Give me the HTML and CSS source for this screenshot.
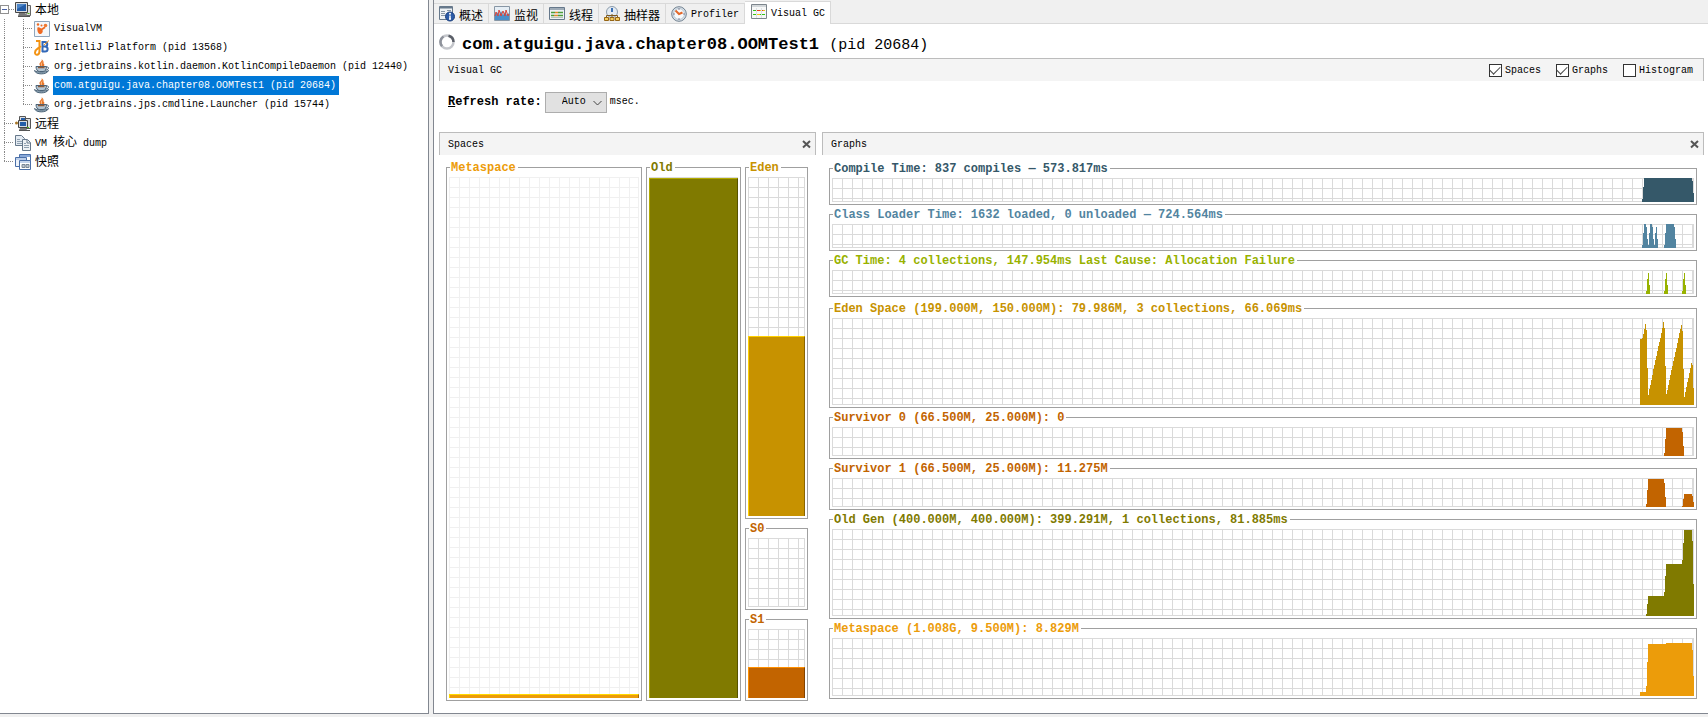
FILE: index.html
```html
<!DOCTYPE html>
<html lang="zh-CN">
<head>
<meta charset="utf-8">
<title>VisualVM</title>
<link rel="stylesheet" href="styles.css">
</head>
<body>
<svg class="defs" aria-hidden="true">
  <symbol id="java" viewBox="0 0 16 16">
    <path d="M7.500 0C9 2 5 3.500 5.500 5.500c.2 1 1 1.500 1 2.500h2.500C11 6.500 10.500 5 9.500 4.500 10 3 9 1 7.500 0z" fill="#e8762a"/>
    <path d="M8.500 3C7 4 7 5.500 8 8" stroke="#fbc08a" fill="none"/>
    <path d="M2 7.500h10.500c0 3-1.500 5-3.500 5H5.500C3.500 12.500 2 10.500 2 7.500z" fill="#b4c5d2" stroke="#4b6377"/>
    <path d="M12.500 8c3.300-.5 2.500 3-1.500 3.300" fill="none" stroke="#4b6377"/>
    <path d="M4 8.500h6.500" stroke="#8a5a3c" stroke-width="1.500"/>
    <path d="M.5 11.500c1 4.500 12.500 4.500 14 0-2.500 2-11.500 2-14 0z" fill="#9db1c1" stroke="#4b6377"/>
  </symbol>
  <symbol id="close" viewBox="0 0 9 9"><path d="M1 1l7 6.500M8 1L1 7.500" stroke="#555" stroke-width="2" fill="none"/></symbol>
</svg>
<div class="app">
  <nav class="tree" aria-label="Applications">
    <ul>
      <li class="row root first"><button class="expander" aria-label="Collapse"></button><span class="stub"></span>
        <svg class="icon" viewBox="0 0 16 16"><path d="M12 3.500h3.500v10H11z" fill="#ddd" stroke="#666"/><path d="M.5.500h12v10H.5z" fill="#d8dde2" stroke="#444"/><path d="M2 2h9v7H2z" fill="#245da8"/><path d="M2 2h9L2 7z" fill="#4d86c8"/><path d="M4 11h6l2 3H3z" fill="#777"/><path d="M3 14.500h12" stroke="#555"/><path d="M12.500 11.500h2" stroke="#52b51b"/></svg>
        <span class="label cjk">本地</span></li>
      <li class="row"><span class="trunk"></span><span class="elbow"></span>
        <svg class="icon" viewBox="0 0 16 16"><path d="M.5.500h15v15H.5z" fill="#f4f7fa" stroke="#8fa6bd"/><path d="M3.500 6.500c2-1 3 1 4 1l3-2 1 1.500-3 2c1 2-1 4.500-3 4-2-1-2.500-5-2-6.500z" fill="#ef6a22"/><circle cx="4" cy="3.500" r="1.200" fill="#ef6a22"/><circle cx="7.500" cy="4.500" r="1" fill="#ef6a22"/><circle cx="11.500" cy="4.500" r="1.800" fill="#f07a32"/></svg>
        <span class="label">VisualVM</span></li>
      <li class="row"><span class="trunk"></span><span class="elbow"></span>
        <svg class="icon" viewBox="0 0 16 16"><path d="M8 2h3c3 0 3 4.500 0 4.500 3.500 0 3.500 5 0 5H8M8.500 1v11M8 6.500h4" fill="none" stroke="#3268b8" stroke-width="2"/><path d="M2 1h3.500v10c0 4.500-4.500 5-4.500 1.500C1 9 4 9 7 6" fill="none" stroke="#f39314" stroke-width="2"/><path d="M10 5l5-4.500" stroke="#f39314"/></svg>
        <span class="label">IntelliJ Platform (pid 13568)</span></li>
      <li class="row"><span class="trunk"></span><span class="elbow"></span><svg class="icon"><use href="#java"/></svg>
        <span class="label">org.jetbrains.kotlin.daemon.KotlinCompileDaemon (pid 12440)</span></li>
      <li class="row"><span class="trunk"></span><span class="elbow"></span><svg class="icon"><use href="#java"/></svg>
        <span class="label selected">com.atguigu.java.chapter08.OOMTest1 (pid 20684)</span></li>
      <li class="row"><span class="trunk"></span><span class="elbow end"></span><svg class="icon"><use href="#java"/></svg>
        <span class="label">org.jetbrains.jps.cmdline.Launcher (pid 15744)</span></li>
      <li class="row root"><span class="elbow"></span>
        <svg class="icon" viewBox="0 0 16 16"><path d="M4.500.500h6v5h-6zM10 2.500h5.500v10H10z" fill="#ddd" stroke="#555"/><path d="M6 2h4v2H6z" fill="#245da8"/><path d="M3.500 4.500h9v7h-9z" fill="#d8dde2" stroke="#444"/><path d="M5 6h6v4H5z" fill="#245da8"/><path d="M5 12h6l1 2H4z" fill="#777"/><path d="M4 14.500h11" stroke="#555"/><circle cx="1.500" cy="7" r="1.500" fill="#a87627"/><path d="M12 11.500h2" stroke="#52b51b"/></svg>
        <span class="label cjk">远程</span></li>
      <li class="row root"><span class="elbow"></span>
        <svg class="icon" viewBox="0 0 16 16"><path d="M.5.500h6l3 3v7h-9z" fill="#e4ebf2" stroke="#66788b"/><path d="M2 4.500h3M2 6.500h5M2 8.500h5" stroke="#8fa0b0"/><path d="M7.500 4.500h5l3 3v8h-8z" fill="#eef2f6" stroke="#66788b"/><path d="M12 5v3h3" fill="none" stroke="#66788b"/><path d="M9 8.500h2M9 10.500h5M9 12.500h5" stroke="#8fa0b0"/></svg>
        <span class="label">VM <span class="cjk">核心</span> dump</span></li>
      <li class="row root"><span class="elbow end"></span>
        <svg class="icon" viewBox="0 0 16 16"><path d="M4.500.500h11v9h-11z" fill="#fff" stroke="#4a6fa8"/><path d="M5 2h10" stroke="#88a8d8" stroke-width="2"/><path d="M.5 3.500h11v9H.5z" fill="#eef3fa" stroke="#4a6fa8"/><path d="M1 5h10" stroke="#88a8d8"/><path d="M4.500 6.500h11v9h-11z" fill="#fff" stroke="#4a6fa8"/><path d="M5 8h10" stroke="#88a8d8"/><path d="M7 10.500h3v3H7zM11 10.500h3v3h-3z" fill="#bbc4cf" stroke="#7a8794"/></svg>
        <span class="label cjk">快照</span></li>
    </ul>
  </nav>

  <main class="main">
    <div class="tabs" role="tablist">
      <button class="tab" role="tab"><svg class="icon" viewBox="0 0 16 16"><path d="M.5.500h13v13H.5z" fill="#eef2f5" stroke="#66788b"/><path d="M1 1.500h12" stroke="#66788b" stroke-width="2"/><path d="M2 5.500h4M2 7.500h4M2 9.500h4M8 4.500h4" stroke="#8796a5"/><circle cx="11" cy="10.500" r="4.500" fill="#2b5ba8" stroke="#1c3f7c"/><path d="M11 9.500v4M10 13h2" stroke="#fff" stroke-width="1.500"/><circle cx="11" cy="7.800" r="1" fill="#fff"/></svg><span class="cjk">概述</span></button>
      <button class="tab" role="tab"><svg class="icon" viewBox="0 0 16 16"><path d="M.5.500h15v14H.5z" fill="#e6eef5" stroke="#8796a5"/><path d="M1 9l2-3 2 3 2-4 2 4 2-3 2 3 2-2v7H1z" fill="#4b8fca"/><path d="M1 10l1-4 2 4 1-6 2 6 2-5 2 5 1-6 2 6 1-2" fill="none" stroke="#d8453a"/></svg><span class="cjk">监视</span></button>
      <button class="tab" role="tab"><svg class="icon" viewBox="0 0 16 16"><path d="M.5 1.500h15v12H.5z" fill="#eef2f5" stroke="#66788b"/><path d="M1 3h14" stroke="#9eabb7" stroke-width="2"/><path d="M2 6.500h4M9 6.500h5M2 9.500h3M9 9.500h5" stroke="#4d9c3a" stroke-width="1.500"/><path d="M6 6.500h3M5 9.500h4" stroke="#e08a2c" stroke-width="1.500"/><path d="M2 11.500h12" stroke="#b8c3bb"/></svg><span class="cjk">线程</span></button>
      <button class="tab" role="tab"><svg class="icon" viewBox="0 0 16 16"><circle cx="8" cy="6" r="5.500" fill="#e3ebf2" stroke="#8b9bab"/><path d="M8 2v4" stroke="#3b70b5" stroke-width="2"/><path d="M2.500 11V9.500h11V11M8 8v4" stroke="#7d5a20" fill="none"/><path d="M.5 11.500h4v3h-4zM6 11.500h4v3H6zM11.500 11.500h4v3h-4z" fill="#f5ce5e" stroke="#956515"/></svg><span class="cjk">抽样器</span></button>
      <button class="tab" role="tab"><svg class="icon" viewBox="0 0 16 16"><circle cx="8" cy="8" r="7.300" fill="#dbe4eb" stroke="#6f7f8e"/><circle cx="8" cy="8" r="5.500" fill="#f7fafc" stroke="#b7c5d2"/><path d="M4.500 4.500L8 8l3.500-1.500" fill="none" stroke="#e4682a" stroke-width="2"/><path d="M8 2v2M8 12v2M2 8h2M12 8h2" stroke="#889"/></svg><span class="latin">Profiler</span></button>
      <button class="tab active" role="tab" aria-selected="true"><svg class="icon" viewBox="0 0 16 16"><path d="M.5.500h15v14H.5z" fill="#f7f8f8" stroke="#7c858c"/><path d="M1 2h14" stroke="#aeb6bc" stroke-width="1"/><path d="M2 6.500h4M2 10.500h3M9 10.500h5" stroke="#35c416"/><path d="M6 6.500h3M11 6.500h1" stroke="#e63c22"/><path d="M9 6.500h2M12 6.500h2M5 10.500h4" stroke="#f0c419"/><path d="M5.500 4v10M10.500 4v10" stroke="#dde1e4"/></svg><span class="latin">Visual GC</span></button>
      <span class="tabs-rest"></span>
    </div>

    <header class="title">
      <svg class="icon" viewBox="0 0 16 16"><circle cx="8" cy="8" r="6.500" fill="none" stroke="#c4c6cb" stroke-width="2.500"/><path d="M9.500 1.700A6.500 6.500 0 0 1 14.500 8" fill="none" stroke="#5b5f68" stroke-width="2.500"/><path d="M4.500 2.500A6.500 6.500 0 0 0 3 12.200" fill="none" stroke="#8e929b" stroke-width="2.500"/></svg>
      <h1>com.atguigu.java.chapter08.OOMTest1 <span>(pid 20684)</span></h1>
    </header>

    <div class="body">
      <div class="bar">
        <span>Visual GC</span>
        <div class="checks">
          <label><input type="checkbox" checked>Spaces</label>
          <label><input type="checkbox" checked>Graphs</label>
          <label><input type="checkbox">Histogram</label>
        </div>
      </div>
      <div class="refresh">
        <label for="rate"><u>R</u>efresh rate:</label>
        <span class="combo"><select id="rate"><option>Auto</option></select><svg viewBox="0 0 9 6"><path d="M.5 1l4 4 4-4" fill="none" stroke="#444"/></svg></span>
        <span>msec.</span>
      </div>
      <div class="panels">
        <section class="panel">
          <div class="bar"><span>Spaces</span><button class="close" aria-label="Close Spaces"><svg><use href="#close"/></svg></button></div>
          <div class="spaces">
            <div class="box meta faint"><h2>Metaspace</h2><div class="grid"><div class="fill" style="height:0.800%"></div></div></div>
            <div class="box old"><h2>Old</h2><div class="grid"><div class="fill" style="height:100%"></div></div></div>
            <div class="young">
              <div class="box eden"><h2>Eden</h2><div class="grid"><div class="fill" style="height:53.400%"></div></div></div>
              <div class="box surv"><h2>S0</h2><div class="grid"></div></div>
              <div class="box surv"><h2>S1</h2><div class="grid"><div class="fill" style="height:45.500%"></div></div></div>
            </div>
          </div>
        </section>
        <section class="panel">
          <div class="bar"><span>Graphs</span><button class="close" aria-label="Close Graphs"><svg><use href="#close"/></svg></button></div>
          <div class="graphs">
            <div class="box compile"><h2>Compile Time: 837 compiles — 573.817ms</h2><div class="grid"><svg class="plot" viewBox="0 0 54 24" preserveAspectRatio="none"><path d="M2 24V21H3V9H4V0H52V3H53V15H54V24Z"/></svg></div></div>
            <div class="box loader"><h2>Class Loader Time: 1632 loaded, 0 unloaded — 724.564ms</h2><div class="grid"><svg class="plot" viewBox="0 0 54 24" preserveAspectRatio="none"><path d="M2 24V21H3V9H4V0H6V3H7V15H8V21H9V9H10V0H12V3H13V15H14V21H15V9H16V3H17V15H18V24ZM24 24V21H25V9H26V0H34V3H35V15H36V24Z"/></svg></div></div>
            <div class="box gc"><h2>GC Time: 4 collections, 147.954ms Last Cause: Allocation Failure</h2><div class="grid"><svg class="plot" viewBox="0 0 54 24" preserveAspectRatio="none"><path d="M6 24V21H7V9H8V3H9V15H10V24ZM24 24V21H25V9H26V3H27V15H28V24ZM42 24V21H43V9H44V3H45V15H46V24Z"/></svg></div></div>
            <div class="box eden"><h2>Eden Space (199.000M, 150.000M): 79.986M, 3 collections, 66.069ms</h2><div class="grid"><svg class="plot" viewBox="0 0 54 87" preserveAspectRatio="none"><path d="M0 87V21H2V20H3V16H4V11H5V6H6V12H7V50H8V77H9V71H10V67H11V62H12V57H13V51H14V47H15V42H16V38H17V33H18V28H19V24H20V20H21V15H22V10H23V4H24V10H25V48H26V76H27V72H28V67H29V62H30V57H31V52H32V48H33V43H34V39H35V34H36V30H37V25H38V20H39V15H40V11H41V7H42V13H43V51H44V79H45V74H46V69H47V64H48V60H49V55H50V50H51V45H52V47H53V70H54V87Z"/></svg></div></div>
            <div class="box surv"><h2>Survivor 0 (66.500M, 25.000M): 0</h2><div class="grid"><svg class="plot" viewBox="0 0 54 29" preserveAspectRatio="none"><path d="M24 29V26H25V12H26V1H42V5H43V19H44V29Z"/></svg></div></div>
            <div class="box surv"><h2>Survivor 1 (66.500M, 25.000M): 11.275M</h2><div class="grid"><svg class="plot" viewBox="0 0 54 29" preserveAspectRatio="none"><path d="M6 29V26H7V12H8V1H24V5H25V19H26V29ZM42 29V28H43V21H44V16H52V18H53V24H54V29Z"/></svg></div></div>
            <div class="box old"><h2>Old Gen (400.000M, 400.000M): 399.291M, 1 collections, 81.885ms</h2><div class="grid"><svg class="plot" viewBox="0 0 54 87" preserveAspectRatio="none"><path d="M6 87V85H7V75H8V67H24V63H25V47H26V35H42V31H43V14H44V1H52V12H53V55H54V87Z"/></svg></div></div>
            <div class="box meta"><h2>Metaspace (1.008G, 9.500M): 8.829M</h2><div class="grid"><svg class="plot" viewBox="0 0 54 58" preserveAspectRatio="none"><path d="M0 58V54H6V48H7V24H8V6H26V5H52V12H53V38H54V58Z"/></svg></div></div>
          </div>
        </section>
      </div>
    </div>
  </main>
</div>
</body>
</html>
```
FILE: styles.css
```css
* { box-sizing: border-box; }
body {
  margin: 0;
  background: #f0f0f0;
  color: #000;
  font: 10px/14px "Liberation Mono", "Noto Sans CJK SC", monospace;
}
h1, h2, ul { margin: 0; padding: 0; }
button, select, input { font: inherit; color: inherit; margin: 0; }
.defs { display: none; }
.icon { width: 16px; height: 16px; flex: none; }
.cjk { font-size: 12px; font-family: "Noto Sans CJK SC", sans-serif; }

.app {
  display: grid;
  grid-template-columns: 429px minmax(0, 1fr);
  column-gap: 4px;
  min-height: 100vh;
  padding-bottom: 3px;
}

/* Application tree */
.tree {
  background: #fff;
  border: solid #828790;
  border-width: 0 1px 1px 0;
}
.tree ul { list-style: none; }
.row {
  display: flex;
  align-items: center;
  height: 19px;
  padding-left: 4px;
  white-space: nowrap;
}
.row.first { padding-left: 0; }
.expander {
  width: 9px;
  height: 9px;
  padding: 0;
  border: 1px solid #919191;
  background: linear-gradient(#4b63a7, #4b63a7) center / 5px 1px no-repeat #fff;
}
.stub {
  width: 6px;
  height: 1px;
  background: repeating-linear-gradient(to right, #888 0 1px, transparent 1px 2px);
}
.trunk, .elbow {
  flex: none;
  width: 19px;
  height: 19px;
  background: repeating-linear-gradient(#888 0 1px, transparent 1px 2px) 0 0 / 1px 100% no-repeat;
}
.elbow {
  width: 11px;
  background:
    repeating-linear-gradient(#888 0 1px, transparent 1px 2px) 0 0 / 1px 100% no-repeat,
    repeating-linear-gradient(to right, #888 0 1px, transparent 1px 2px) 0 9px / 10px 1px no-repeat;
}
.elbow.end { background-size: 1px 10px, 10px 1px; }
.label {
  height: 19px;
  margin-left: 3px;
  padding: 1px 3px 0 1px;
  line-height: 18px;
}
.label.cjk { padding-top: 0; }
.label .cjk { line-height: 14px; }
.selected { background: #0078d7; color: #fff; }

/* Main window */
.main {
  display: flex;
  flex-direction: column;
  min-width: 0;
  background: #fff;
  border: solid #828790;
  border-width: 0 0 1px 1px;
}
.tabs { display: flex; height: 24px; background: #f0f0f0; }
.tab {
  display: flex;
  align-items: center;
  gap: 4px;
  margin-top: 3px;
  padding: 0 5px;
  border: solid #d9d9d9;
  border-width: 1px 1px 1px 0;
  background: #f0f0f0;
  white-space: nowrap;
}
.tab .cjk { padding-top: 2px; }
.tab .latin { padding-top: 3px; }
.tab.active {
  margin-top: 1px;
  padding: 0 5px 2px 6px;
  border-bottom: 0;
  background: #fff;
}
.tabs-rest { flex: 1; border-bottom: 1px solid #d9d9d9; }

.title { display: flex; align-items: center; gap: 7px; height: 34px; padding: 8px 5px 0; }
.title .icon { margin-bottom: 6px; }
.title h1 { font-size: 17px; line-height: 20px; }
.title h1 span { font-size: 15px; font-weight: 400; }

.body { display: flex; flex-direction: column; flex: 1; padding: 0 4px 0 5px; }
.bar {
  display: flex;
  align-items: center;
  justify-content: space-between;
  height: 23px;
  padding: 1px 4px 0 8px;
  border: solid #bcbcbc;
  border-width: 1px 1px 0 1px;
  background: #f4f4f4;
}
.checks { display: flex; gap: 15px; padding-right: 6px; }
.checks label { display: flex; align-items: center; gap: 3px; }
.checks input {
  appearance: none;
  display: grid;
  place-items: center;
  width: 13px;
  height: 13px;
  border: 1px solid #333;
  background: #fff;
}
.checks input:checked::after {
  content: "";
  width: 9px;
  height: 5px;
  margin-bottom: 3px;
  border: solid #444;
  border-width: 0 0 1px 1px;
  transform: rotate(-45deg);
}
.refresh { display: flex; align-items: center; gap: 3px; height: 51px; padding: 0 0 9px 9px; }
.refresh label { font-size: 12px; font-weight: 700; }
.combo { position: relative; display: flex; }
.combo select {
  appearance: none;
  width: 62px;
  height: 21px;
  padding: 0 0 0 16px;
  border: 1px solid #adadad;
  border-radius: 0;
  background: #e1e1e1;
}
.combo svg { position: absolute; right: 5px; top: 8px; width: 9px; height: 6px; }
.close { display: flex; padding: 0; border: 0; background: none; }
.close svg { width: 9px; height: 9px; }

.panels {
  display: grid;
  grid-template-columns: 377fr 882fr;
  column-gap: 6px;
  flex: 1;
}
.panel { display: flex; flex-direction: column; min-width: 0; }
.spaces {
  display: grid;
  grid-template-columns: 196fr 95fr 63fr;
  column-gap: 4px;
  flex: 1;
  padding: 12px 8px 12px 7px;
}
.young { display: grid; grid-template-rows: 352fr 82fr 82fr; row-gap: 9px; }
.graphs {
  display: grid;
  grid-template-rows: 37fr 37fr 39fr 100fr 42fr 42fr 100fr 71fr;
  row-gap: 9px;
  flex: 1;
  padding: 13px 7px 14px 7px;
}
.box.gc { margin-bottom: 2px; }

/* Titled frame around a grid */
.box {
  display: flex;
  flex-direction: column;
  align-items: flex-start;
  min-width: 0;
  padding: 0 2px 2px;
  border: 1px solid #a0a0a0;
}
.box h2 {
  height: 16px;
  margin: -7px 0 0 1px;
  padding: 0 2px 0 1px;
  background: #fff;
  color: var(--tone);
  font-size: 12px;
  line-height: 14px;
  white-space: nowrap;
}
.grid {
  --line: #dadada;
  display: flex;
  flex: 1;
  flex-direction: column;
  justify-content: flex-end;
  align-self: stretch;
  border: solid var(--line);
  border-width: 0 1px 1px 0;
  background:
    linear-gradient(to right, var(--line) 1px, transparent 1px) 0 0 / 10px 10px,
    linear-gradient(var(--line) 1px, transparent 1px) 0 0 / 10px 10px;
}
.faint .grid { --line: #f0f0f0; }
.fill {
  min-height: 4px;
  margin: 0 -1px -1px 0;
  border: solid var(--light);
  border-width: 1px 1px 0 1px;
  border-right-color: var(--dark);
  background: var(--tone);
}
.plot {
  flex: 1;
  align-self: flex-end;
  width: 54px;
  height: 0;
  margin: 0 -1px -1px 0;
  fill: var(--tone);
  shape-rendering: crispEdges;
}
.compile { --tone: #355869; }
.loader { --tone: #5284a0; }
.gc { --tone: #98b200; }
.eden { --tone: #c79200; --light: #ffd000; --dark: #8a6500; }
.surv { --tone: #c26400; --light: #ff9000; --dark: #824300; }
.old { --tone: #807a00; --light: #b2aa00; --dark: #565200; }
.meta { --tone: #ec9c0a; --light: #ffd800; --dark: #a36b06; }
```
